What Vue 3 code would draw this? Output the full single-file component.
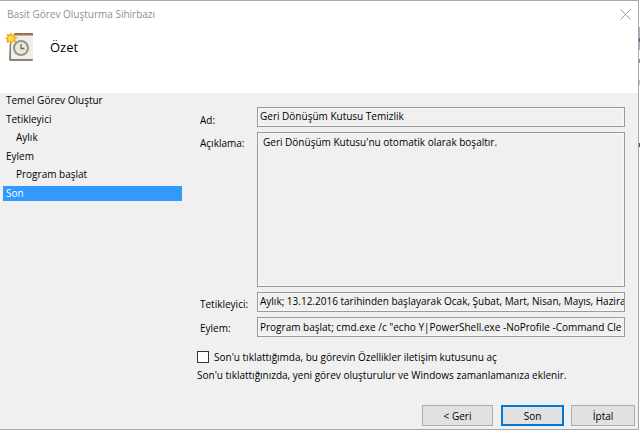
<script setup>
const steps = [
  { label: 'Temel Görev Oluştur' },
  { label: 'Tetikleyici' },
  { label: 'Aylık', sub: true },
  { label: 'Eylem' },
  { label: 'Program başlat', sub: true },
  { label: 'Son', active: true }
]
</script>

<template>
  <div class="window">
    <header class="header">
      <div class="titlebar">
        <span class="title">Basit Görev Oluşturma Sihirbazı</span>
        <svg class="close" width="11" height="11" viewBox="0 0 11 11"><path d="M.5.5l10 10M10.5.5l-10 10" stroke="#9a9a9a" fill="none"/></svg>
      </div>
      <div class="heading">
        <svg class="icon" width="30" height="30" viewBox="0 0 30 30">
          <path d="M5 3h23v25l-1 1H5l-1-1z" fill="#85857c"/>
          <rect x="6" y="3" width="22" height="24" fill="#f2eee4"/>
          <rect x="9" y="1" width="19" height="2.500" fill="#9a6f55"/>
          <circle cx="16" cy="16" r="8" fill="#8a96a3"/>
          <circle cx="16" cy="16" r="6" fill="#efe7cf"/>
          <path d="M16 12v4.500h3.500" stroke="#6b6b60" stroke-width="1.300" fill="none"/>
          <path d="M6 0l1.300 3L10 1.500 9.300 4.600 13 5.500 10 7.300l1.200 3-3.200-.7L6 13l-1.400-3.200L1.300 11l.8-3.400L0 6.500l2.600-1.700L1.500 1.500l3.100 1.300z" fill="#f5a81c"/>
          <circle cx="6" cy="6.500" r="3" fill="#ffd84a"/>
        </svg>
        <h1>Özet</h1>
      </div>
    </header>

    <div class="body">
      <nav class="steps">
        <div
          v-for="s in steps"
          :key="s.label"
          class="step"
          :class="{ sub: s.sub, active: s.active }"
        >{{ s.label }}</div>
      </nav>

      <main class="content">
        <div class="fields">
          <label class="l-ad">Ad:</label>
          <div class="box up">Geri Dönüşüm Kutusu Temizlik</div>
          <label class="l-desc">Açıklama:</label>
          <div class="box tall">Geri Dönüşüm Kutusu'nu otomatik olarak boşaltır.</div>
          <label class="l-trig">Tetikleyici:</label>
          <div class="box up">Aylık; 13.12.2016 tarihinden başlayarak Ocak, Şubat, Mart, Nisan, Mayıs, Haziran</div>
          <label class="l-act">Eylem:</label>
          <div class="box">Program başlat; cmd.exe /c "echo Y|PowerShell.exe -NoProfile -Command Cle</div>
        </div>
        <div class="check">
          <span class="checkbox"></span>
          <span>Son'u tıklattığımda, bu görevin Özellikler iletişim kutusunu aç</span>
        </div>
        <p class="note">Son'u tıklattığınızda, yeni görev oluşturulur ve Windows zamanlamanıza eklenir.</p>
        <div class="buttons">
          <button class="back">&lt; Geri</button>
          <button class="primary">Son</button>
          <button>İptal</button>
        </div>
      </main>
    </div>
  </div>
</template>

<style>
html, body {
  margin: 0;
  background: linear-gradient(to bottom, #fff 0 27px, #9db4cc 27px 38px, #50607a 38px 42px, #9db4cc 42px 50px, #fff 50px 59px, #6f93b8 59px 63px, #fff 63px 80px, #b0c0d0 80px 85px, #fff 85px 143px, #7a4a20 143px 147px, #fff 147px 430px);
}
</style>

<style scoped>
.window {
  box-sizing: border-box;
  width: 639px;
  height: 430px;
  border-top: 1px solid #a8a8a8;
  border-right: 1px solid #a8a8a8;
  border-bottom: 1px solid #a8a8a8;
  display: flex;
  flex-direction: column;
  font-family: "Open Sans", "Noto Sans", sans-serif;
  font-size: 10px;
  color: #000;
  overflow: hidden;
}
.header {
  height: 92px;
  flex: none;
  background: #fff;
}
.titlebar {
  display: flex;
  justify-content: space-between;
  align-items: center;
  height: 26px;
  padding: 0 7px 0 7px;
}
.title { color: #8f8f8f; }
.heading {
  display: flex;
  align-items: center;
  gap: 15px;
  padding-left: 5px;
  height: 30px;
  margin-top: 5px;
}
.icon { flex: none; }
h1 {
  margin: 0;
  font-size: 13px;
  font-weight: 400;
  color: #000;
}
.body {
  flex: 1;
  display: flex;
  background: #f0f0f0;
  min-height: 0;
}
.steps {
  width: 179px;
  margin-left: 3px;
  flex: none;
}
.step {
  height: 18.600px;
  line-height: 15px;
  padding: 0 3px;
  box-sizing: border-box;
}
.step.sub { padding-left: 13px; }
.step.active {
  background: #3399ff;
  color: #fff;
  height: 15px;
}
.content {
  flex: 1;
  min-width: 0;
  padding: 14px 13px 0 15px;
  display: flex;
  flex-direction: column;
}
.fields {
  display: grid;
  grid-template-columns: 60px 1fr;
  grid-template-rows: 20px 155px 20px 20px;
  row-gap: 5px;
}
.fields label { padding-left: 3px; }
.l-ad { padding-top: 6px; }
.l-desc { padding-top: 4px; }
.l-trig { padding-top: 5px; }
.l-act { padding-top: 4px; }
.box {
  box-sizing: border-box;
  border: 1px solid #9a9a9a;
  box-shadow: inset 0 0 0 1px #f7f7f7;
  background: #f0f0f0;
  padding: 1px 2px;
  white-space: nowrap;
  overflow: hidden;
  line-height: 16px;
}
.box.up { padding-top: 0; }
.box.tall { padding-left: 5px; }
.check {
  display: flex;
  align-items: center;
  gap: 5px;
  margin-top: 14px;
  height: 12px;
}
.checkbox {
  box-sizing: border-box;
  width: 12px;
  height: 12px;
  border: 1px solid #333;
  background: #fff;
  flex: none;
}
.note {
  margin: 5px 0 0 0;
  line-height: 15px;
}
.buttons {
  display: flex;
  justify-content: flex-end;
  gap: 7px;
  margin: 22px -10px 0 0;
}
button {
  box-sizing: border-box;
  width: 64px;
  height: 21px;
  padding: 0;
  border: 1px solid #adadad;
  background: #e1e1e1;
  font: inherit;
  color: #000;
}
button.back { width: 71px; margin-right: 1px; }
button.primary { width: 63px; border: 2px solid #0078d7; }
</style>
